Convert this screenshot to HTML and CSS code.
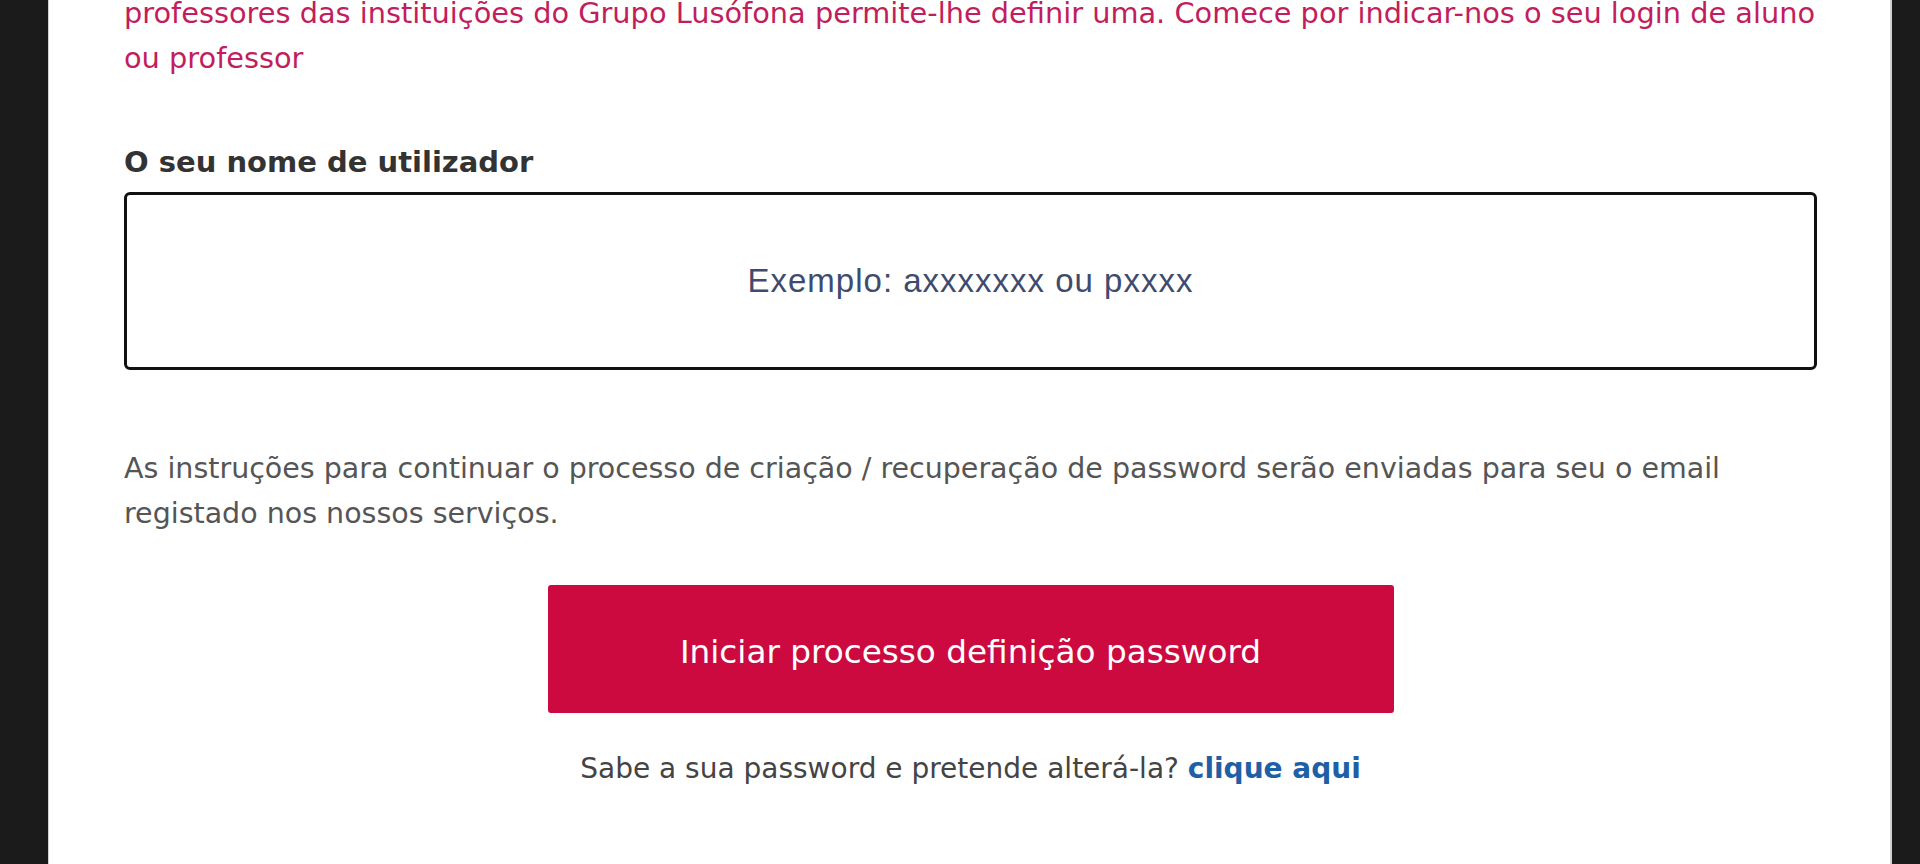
FILE: index.html
```html
<!DOCTYPE html>
<html lang="pt">
<head>
    <meta charset="UTF-8">
    <meta name="viewport" content="width=device-width, initial-scale=1.0">
    <title>Definição de password</title>
    <link rel="stylesheet" href="styles.css">
</head>
<body>
    <div class="screen">
        <main class="panel">
            <p class="intro">professores das instituições do Grupo Lusófona permite-lhe definir uma. Comece por indicar-nos o seu login de aluno ou professor</p>

            <form class="reset-form" action="#">
                <label class="field-label" for="username">O seu nome de utilizador</label>
                <input class="field" id="username" type="text" placeholder="Exemplo: axxxxxxx ou pxxxx" autofocus>

                <p class="hint">As instruções para continuar o processo de criação / recuperação de password serão enviadas para seu o email registado nos nossos serviços.</p>

                <button class="submit" type="submit">Iniciar processo definição password</button>

                <p class="change">Sabe a sua password e pretende alterá-la? <a href="#">clique aqui</a></p>
            </form>
        </main>
    </div>
</body>
</html>
```

FILE: styles.css
```css
* {
    box-sizing: border-box;
}

html,
body {
    margin: 0;
    height: 100%;
}

body {
    background-color: #1b1b1b;
    font-family: "DejaVu Sans", sans-serif;
    font-size: 28.5px;
    line-height: 45px;
    overflow: hidden;
}

.screen {
    display: flex;
    height: 864px;
    padding: 0 28px 0 48px;
}

.panel {
    flex: 1;
    background-color: #fff;
    border-left: 1px solid #d2d2d2;
    border-right: 2px solid #d2d2d2;
    padding: 0 73px 0 75px;
    overflow: hidden;
}

p {
    margin: 0;
}

.intro {
    margin-top: -9px;
    color: #c21d5c;
    font-size: 28.8px;
}

.field-label {
    display: block;
    margin-top: 59px;
    color: #333;
    font-size: 29px;
    font-weight: bold;
}

.field {
    display: block;
    width: 100%;
    height: 178px;
    margin-top: 7px;
    border: 3px solid #111;
    border-radius: 6px;
    background: #fff;
    outline: none;
    text-align: center;
    font-family: "Liberation Sans", Arial, sans-serif;
    font-size: 33px;
    letter-spacing: 1px;
    color: #333;
    caret-color: #333;
}

.field::placeholder {
    color: #3f4b6e;
    opacity: 1;
}

.hint {
    margin-top: 76px;
    color: #555;
}

.submit {
    display: block;
    width: 846px;
    height: 128px;
    margin: 49px auto 0;
    padding-top: 6px;
    border: none;
    border-radius: 3px;
    background-color: #cc0a40;
    color: #fff;
    font-family: "DejaVu Sans", sans-serif;
    font-size: 32.7px;
    cursor: pointer;
}

.change {
    margin-top: 33px;
    text-align: center;
    color: #444;
    font-size: 28px;
}

.change a {
    color: #1f5fa6;
    font-weight: bold;
    text-decoration: none;
}
```
